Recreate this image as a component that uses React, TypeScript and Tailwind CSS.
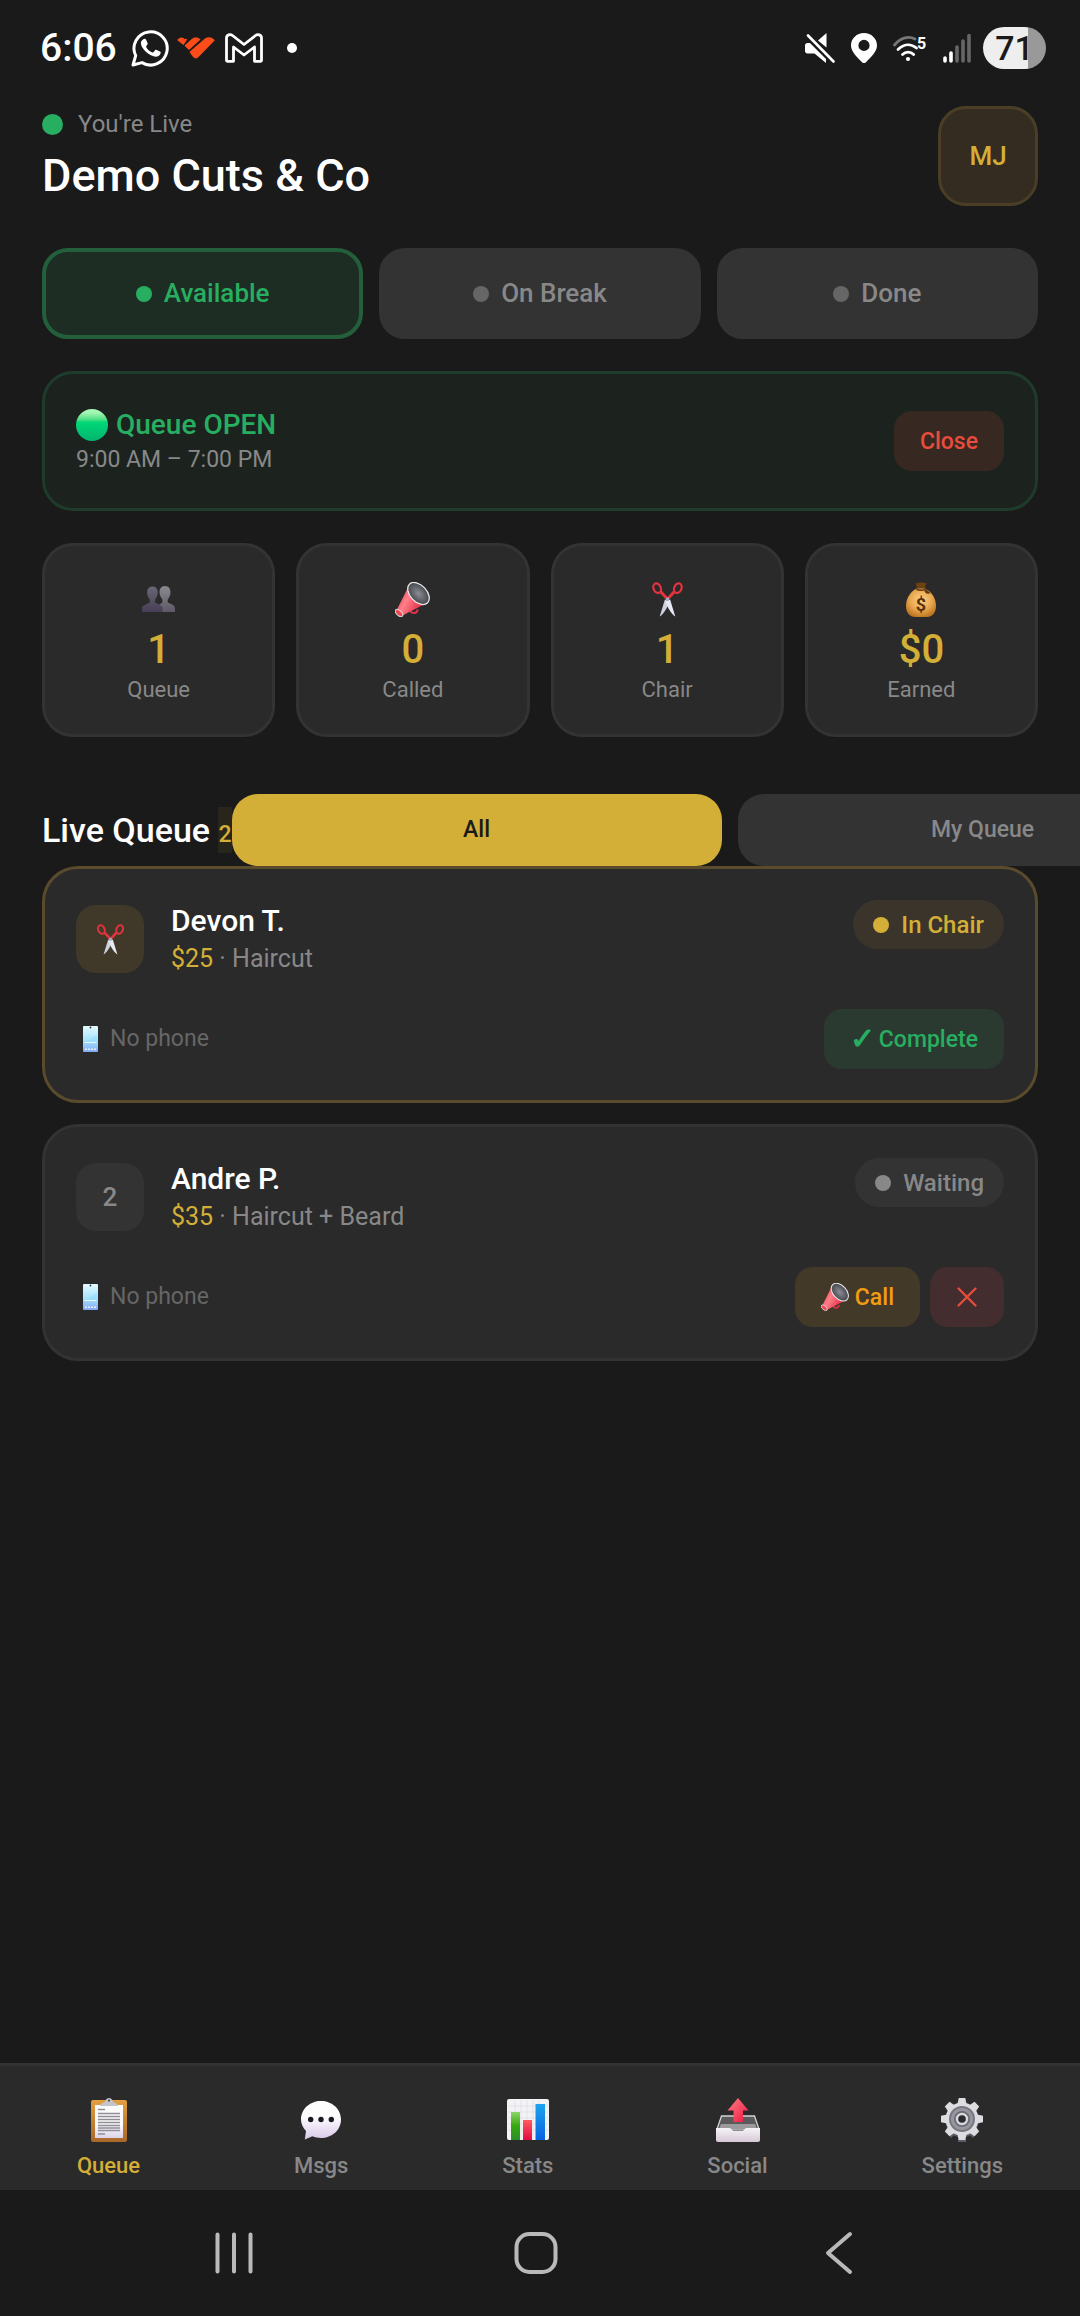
import { useState } from "react";
import type { ReactNode } from "react";

const statuses = ["Available", "On Break", "Done"];

const queue = [
  { id: 1, name: "Devon T.", price: "$25", service: "Haircut", inChair: true },
  { id: 2, name: "Andre P.", price: "$35", service: "Haircut + Beard", inChair: false },
];

function PeopleIcon() {
  return (
    <svg width="33" height="26" viewBox="0 0 33 26" aria-hidden="true">
      <defs>
        <linearGradient id="back" x1="0" y1="0" x2="0" y2="1">
          <stop offset="0" stopColor="#8b8a90" />
          <stop offset="1" stopColor="#5d5866" />
        </linearGradient>
        <linearGradient id="front" x1="0" y1="0" x2="0" y2="1">
          <stop offset="0" stopColor="#6a6675" />
          <stop offset="1" stopColor="#463e55" />
        </linearGradient>
      </defs>
      <path d="M23 0c3.600 0 5.500 2.800 5.500 6.200 0 3-1.400 5.600-2.800 7.200v3.200c2.800 1.600 7.300 2.200 7.300 6V26H15v-3c0-3.800 3.200-4.800 5.400-6.400v-3.200c-1.400-1.600-2.900-4.200-2.900-7.200C17.500 2.800 19.400 0 23 0z" fill="url(#back)" />
      <path d="M10.500 .5c3.500 0 5.300 2.600 5.300 6 0 3-1.400 5.400-2.700 7v3c2.200 1.700 7.400 2.200 7.400 6.200V26H0v-3.300c0-4 5.600-4.500 7.800-6.200v-3c-1.300-1.600-2.700-4-2.700-7 0-3.400 1.900-6 5.400-6z" fill="url(#front)" />
    </svg>
  );
}

function MegaphoneIcon({ size = 35 }: { size?: number }) {
  return (
    <svg width={size} height={size} viewBox="0 0 35 35" aria-hidden="true">
      <defs>
        <linearGradient id="cone" x1="0" y1="0" x2="1" y2=".5">
          <stop offset="0" stopColor="#d8283f" />
          <stop offset=".45" stopColor="#ff8088" />
          <stop offset="1" stopColor="#e0213f" />
        </linearGradient>
        <radialGradient id="mouth">
          <stop offset="0" stopColor="#8a8d93" />
          <stop offset="1" stopColor="#46484e" />
        </radialGradient>
      </defs>
      <path d="M15.500 29c1 3 6.500 3 7.200-1.500" fill="none" stroke="#e0304a" strokeWidth="2" />
      <path d="M13.500 4.500L1.500 28.500l6 5L32 21z" fill="url(#cone)" />
      <ellipse cx="4" cy="31" rx="4.600" ry="2.400" transform="rotate(42 4 31)" fill="#f1474f" stroke="#d9d9dc" strokeWidth="1" />
      <ellipse cx="23.500" cy="11.500" rx="13" ry="8.300" transform="rotate(47 23.500 11.500)" fill="url(#mouth)" stroke="#e9e9ec" strokeWidth="1.300" />
    </svg>
  );
}

function ScissorsIcon({ size = 35 }: { size?: number }) {
  return (
    <svg width={size} height={size} viewBox="-2.500 0 35 35" aria-hidden="true">
      <path d="M12.400 17.500L7.200 34.500c4-2.500 7.800-9 10-15z" fill="#cdd0e0" />
      <path d="M17.600 17.500l5.200 17c-4-2.500-7.800-9-10-15z" fill="#e6e8f3" />
      <g fill="none" stroke="#e5323f" strokeWidth="2.200">
        <ellipse cx="4.700" cy="6.200" rx="3.600" ry="5" transform="rotate(-22 4.700 6.200)" />
        <ellipse cx="25.300" cy="6.200" rx="3.600" ry="5" transform="rotate(22 25.300 6.200)" />
        <path d="M8 9.500l6 6.500M22 9.500l-6 6.500" strokeWidth="3" />
      </g>
      <circle cx="15" cy="17" r="1.800" fill="#a8abb8" />
    </svg>
  );
}

function MoneyBagIcon() {
  return (
    <svg width="30" height="35" viewBox="0 0 30 35" aria-hidden="true">
      <defs>
        <radialGradient id="bag" cx=".5" cy=".4" r=".62">
          <stop offset="0" stopColor="#ffd08a" />
          <stop offset=".6" stopColor="#e7a64e" />
          <stop offset="1" stopColor="#bd7420" />
        </radialGradient>
      </defs>
      <path d="M9.500 1c2 .8 3-.8 5.500-.5 2.500-.3 3.500 1 5.500.2l-1.700 5.800h-7.600z" fill="#6d4210" />
      <path d="M10.500 6.500h8.500C25 9.500 30 15.500 30 24c0 7-4 11-9 11H9c-5 0-9-4-9-11C0 15.500 5 9.500 10.500 6.500z" fill="url(#bag)" />
      <path d="M10.300 7.200c3 1.300 6.400 1.300 9.200.3l3.500 3.300c-1.600.5-3.200-.6-4-2" fill="none" stroke="#5e370c" strokeWidth="1.500" />
      <text x="15" y="29" textAnchor="middle" fontSize="18" fontWeight="700" fill="#5a3208" fontFamily="Roboto, sans-serif">$</text>
    </svg>
  );
}

function PhoneIcon() {
  return (
    <svg width="15" height="26" viewBox="0 0 15 26" aria-hidden="true">
      <defs>
        <linearGradient id="screen" x1="0" y1="0" x2="0" y2="1">
          <stop offset="0" stopColor="#e4fbff" />
          <stop offset=".55" stopColor="#a5e2fb" />
          <stop offset="1" stopColor="#84a8f4" />
        </linearGradient>
      </defs>
      <rect width="15" height="26" rx="1" fill="url(#screen)" />
      <path d="M14 1v8L3 16h11z" fill="#8fd9fb" opacity=".5" />
      <circle cx="7.500" cy="1.500" r=".9" fill="#333" />
      <path d="M1.500 16.500h12" stroke="#e8f8ff" />
      <path d="M2 23.200h11.500" stroke="#fff" strokeWidth="1.500" strokeDasharray="2 1" opacity=".8" />
    </svg>
  );
}

function ClipboardIcon() {
  return (
    <svg width="36" height="44" viewBox="0 0 36 44" aria-hidden="true">
      <defs>
        <linearGradient id="board" x1="0" y1="0" x2="0" y2="1">
          <stop offset="0" stopColor="#e3a040" />
          <stop offset="1" stopColor="#a9672b" />
        </linearGradient>
        <linearGradient id="sheet" x1="0" y1="0" x2="0" y2="1">
          <stop offset=".6" stopColor="#fbfbfc" />
          <stop offset="1" stopColor="#dcd3ea" />
        </linearGradient>
      </defs>
      <rect y="2" width="36" height="42" rx="2" fill="url(#board)" />
      <path d="M4 7h28v33H4z" fill="url(#sheet)" />
      <path d="M7 11.500h7M7 36h7M7 15.500h22M7 18.500h22M7 21.500h22M7 24.500h22M7 27.500h22M7 30h22M7 32.500h22" stroke="#8f8e96" strokeWidth="1.300" />
      <path d="M9 8c0-3 3-2.500 5-4.500C15 1 16.500 0 18 0s3 1 4 3.500C24 5.500 27 5 27 8z" fill="#c3c4c8" />
      <circle cx="18" cy="2.600" r="1.100" fill="#44454a" />
    </svg>
  );
}

function BubbleIcon() {
  return (
    <svg width="40" height="44" viewBox="0 -3 40 44" aria-hidden="true">
      <defs>
        <linearGradient id="bubble" x1="0" y1="0" x2="0" y2="1">
          <stop offset=".4" stopColor="#fdfdfe" />
          <stop offset="1" stopColor="#d9c8ea" />
        </linearGradient>
      </defs>
      <path d="M20 0c11 0 20 8 20 18.500S31 37 20 37c-3 0-6-.6-8.600-1.700L3.800 38.500 5 30C2 27 0 23 0 18.500 0 8 9 0 20 0z" fill="url(#bubble)" />
      <g fill="#1d1720">
        <circle cx="9.700" cy="18.500" r="2.700" />
        <circle cx="20" cy="18.500" r="2.700" />
        <circle cx="30.300" cy="18.500" r="2.700" />
      </g>
    </svg>
  );
}

function ChartIcon() {
  return (
    <svg width="42" height="44" viewBox="0 -1 42 44" aria-hidden="true">
      <defs>
        <linearGradient id="green" x1="0" y1="0" x2="0" y2="1">
          <stop offset="0" stopColor="#8fd46a" />
          <stop offset=".5" stopColor="#35a80c" />
          <stop offset="1" stopColor="#2b8e2b" />
        </linearGradient>
        <linearGradient id="red" x1="0" y1="0" x2="0" y2="1">
          <stop offset="0" stopColor="#ff5a5f" />
          <stop offset="1" stopColor="#e20a45" />
        </linearGradient>
        <linearGradient id="blue" x1="0" y1="0" x2="0" y2="1">
          <stop offset="0" stopColor="#1ea4ee" />
          <stop offset="1" stopColor="#0763e0" />
        </linearGradient>
      </defs>
      <rect width="42" height="41" rx="2" fill="#f3f3f6" />
      <path d="M1 7h40M1 13h40M1 19h40M1 25h40M1 31h40M8 1v39M14 1v39M20 1v39M26 1v39M32 1v39" stroke="#dcdce2" strokeWidth=".7" />
      <path d="M4 13h9v28H4z" fill="url(#green)" />
      <path d="M16 21h9v20h-9z" fill="url(#red)" />
      <path d="M28.500 5h9.500v36h-9.500z" fill="url(#blue)" />
    </svg>
  );
}

function OutboxIcon() {
  return (
    <svg width="44" height="44" viewBox="0 0 44 44" aria-hidden="true">
      <defs>
        <linearGradient id="tray" x1="0" y1="0" x2="0" y2="1">
          <stop offset="0" stopColor="#f6f3f7" />
          <stop offset="1" stopColor="#d6c9d6" />
        </linearGradient>
        <linearGradient id="arrow" x1="0" y1="0" x2="1" y2="1">
          <stop offset="0" stopColor="#ff7f85" />
          <stop offset="1" stopColor="#ee1742" />
        </linearGradient>
      </defs>
      <path d="M5.500 18h33l4.500 13H1z" fill="#5b5b5d" stroke="#d4d4d6" strokeWidth="1.300" />
      <path d="M5 26h34l2 5H3z" fill="#9b9b9e" />
      <path d="M0 30h14l3 2.500h10l3-2.500h14v12c0 1-.8 2-2 2H2c-1.200 0-2-1-2-2z" fill="url(#tray)" />
      <path d="M22 0l10.500 12.500H27V24h-9.500V12.500h-6z" fill="url(#arrow)" />
    </svg>
  );
}

function GearIcon() {
  return (
    <svg width="42" height="44" viewBox="0 0 42 44" aria-hidden="true">
      <g fill="#5d5c68">
        <circle cx="21" cy="23" r="16.500" />
        <path d="M17 38h8v6h-8zM5 34l5-4 5 5-5 5zM37 34l-5-4-5 5 5 5z" />
      </g>
      <g fill="#dcdce1">
        <circle cx="21" cy="21" r="16.500" />
        {[0, 45, 90, 135, 180, 225, 270, 315].map((a) => (
          <path key={a} d="M16.500 6l1.200-6h6.600l1.200 6z" transform={`rotate(${a} 21 21)`} />
        ))}
      </g>
      <circle cx="21" cy="21" r="13" fill="#777782" />
      <circle cx="21" cy="21" r="11" fill="#96969f" />
      <circle cx="21" cy="21" r="8" fill="#6c6c76" />
      <circle cx="21" cy="21" r="5" fill="#2b2b2e" stroke="#d7d7dc" strokeWidth="2.400" />
    </svg>
  );
}

const stats = [
  { label: "Queue", value: "1", icon: <PeopleIcon /> },
  { label: "Called", value: "0", icon: <MegaphoneIcon /> },
  { label: "Chair", value: "1", icon: <ScissorsIcon /> },
  { label: "Earned", value: "$0", icon: <MoneyBagIcon /> },
];

const tabs = [
  { label: "Queue", icon: <ClipboardIcon /> },
  { label: "Msgs", icon: <BubbleIcon /> },
  { label: "Stats", icon: <ChartIcon /> },
  { label: "Social", icon: <OutboxIcon /> },
  { label: "Settings", icon: <GearIcon /> },
];

function StatusBar() {
  return (
    <div className="flex h-24 items-center justify-between pr-[34px] pl-10">
      <div className="flex items-center">
        <span className="text-[39px] leading-none font-medium">6:06</span>
        <svg className="ml-[14px]" width="38" height="38" viewBox="0 0 38 38" aria-label="WhatsApp">
          <path d="M2 36l2.700-9.300A16.600 16.600 0 1 1 11 33.600z" fill="none" stroke="#fff" strokeWidth="3" strokeLinejoin="round" />
          <path d="M12 10.500c1-1 2.600-1 3.100.2l1.500 3.500c.3.700-.2 1.500-1.200 2.700-.4.500-.4.900 0 1.500 1.500 2.400 3.300 3.900 5.800 5 .6.200 1 .1 1.400-.4l1.500-1.800c.5-.6 1-.6 1.600-.3l3.300 1.600c.7.400.8.900.6 1.700-.5 2.300-2.700 3.500-4.800 3.500-2.600 0-7-2-9.700-4.700-3-3-5.300-6.200-5.200-9 .1-1.500.9-2.600 2.100-3.500z" fill="#fff" />
        </svg>
        <svg className="ml-2" width="38" height="22" viewBox="0 0 38 22" aria-label="Workout">
          <g fill="#fc4c1a" stroke="#fc4c1a" strokeWidth="1.600" strokeLinejoin="round">
            <path d="M1.200 3c2-2 4.500-2 6.500 0l1.500-.5L6.200 7z" />
            <path d="M8.600 8.700L15.500 2.300c2-1.600 5-1.500 7 .2L12 12z" />
            <path d="M14.500 14.200L28.500 2c3-1.500 6-1 8.300 1.300L21 19.500c-1.400 1.300-3 1.300-4.300 0L13.500 15z" />
          </g>
        </svg>
        <svg className="ml-[10px]" width="38" height="30" viewBox="0 0 38 30" aria-label="Gmail">
          <path d="M1.500 5c0-3 3.500-4.500 6-2.500L19 11.500l11.500-9c2.500-2 6-.5 6 2.500v22c0 .8-.5 1.300-1.300 1.300h-5.700V14L19 22 8.500 14v14.300H2.800c-.8 0-1.300-.5-1.300-1.300z" fill="none" stroke="#fff" strokeWidth="2.800" strokeLinejoin="round" />
        </svg>
        <span className="ml-6 size-[10px] rounded-full bg-white" />
      </div>
      <div className="flex items-center gap-4">
        <svg width="30" height="30" viewBox="0 0 30 30" aria-label="Muted">
          <path d="M0 12.500C0 11 1 10 2.500 10H5l16 16v4L9.500 20.500h-7C1 20.500 0 19.500 0 18z" fill="#fff" />
          <path d="M13 7.500L21.500 0v14.500z" fill="#fff" />
          <path d="M3 2.500L28.500 28.500" stroke="#fff" strokeWidth="2.600" strokeLinecap="round" />
        </svg>
        <svg width="26" height="30" viewBox="0 0 26 30" aria-label="Location">
          <path fillRule="evenodd" d="M13 0c7.200 0 13 5.500 13 12.500C26 19 19 25 15 29.300c-1 1-3 1-4 0C7 25 0 19 0 12.500 0 5.500 5.800 0 13 0zm0 6.800a5.600 5.600 0 1 0 0 11.200 5.600 5.600 0 0 0 0-11.200z" fill="#fff" />
        </svg>
        <svg width="34" height="34" viewBox="1 -4 34 34" aria-label="Wi-Fi">
          <g fill="none" strokeWidth="2.800" strokeLinecap="round">
            <path d="M2.500 10C9 2 17 1 23 4" stroke="#777" />
            <path d="M6 14.500c6-6 13-6 18.500-1.500" stroke="#fff" />
            <path d="M10.500 19.500c3.300-3.300 8-3.300 11.200 0" stroke="#fff" />
          </g>
          <circle cx="16" cy="24" r="2.100" fill="#fff" />
          <text x="25" y="13.500" fontSize="16" fontWeight="700" fill="#fff" fontFamily="Roboto, sans-serif">5</text>
        </svg>
        <svg width="28" height="30" viewBox="0 0 28 30" aria-label="Signal">
          <g strokeWidth="3.600" strokeLinecap="round">
            <path d="M2 25v3M8 20v8" stroke="#fff" />
            <path d="M14 14v14M20 8v20M26 2.500V28" stroke="#666" />
          </g>
        </svg>
        <span className="-ml-1 flex h-[42px] w-[63px] items-center justify-center rounded-full bg-[linear-gradient(90deg,#eeeeee_71%,#999999_71%)] text-[34px] leading-none font-medium text-[#1a1a1a]">
          71
        </span>
      </div>
    </div>
  );
}

function ActionButton({ className, children, label }: { className: string; children: ReactNode; label?: string }) {
  return (
    <button aria-label={label} className={`flex h-[60px] items-center rounded-[18px] px-[26px] text-[23px] leading-none font-medium ${className}`}>
      {children}
    </button>
  );
}

function QueueCard({ item }: { item: (typeof queue)[number] }) {
  return (
    <li className={`flex flex-col gap-[31px] rounded-[36px] border-[3px] bg-[#2a2a2a] p-[31px] ${item.inChair ? "border-[#5a4b2c]" : "border-[#333333]"}`}>
      <div className="flex items-center gap-[27px]">
        <span className={`flex size-[68px] items-center justify-center rounded-[20px] text-[26px] font-medium ${item.inChair ? "bg-[#403929]" : "bg-[#333333] text-[#888888]"}`}>
          {item.inChair ? <ScissorsIcon size={31} /> : item.id}
        </span>
        <div className="flex-1 pt-[2px]">
          <h3 className="text-[30px] leading-[38px] font-medium">{item.name}</h3>
          <p className="text-[25px] leading-[38px] text-[#888888]">
            <span className="text-[#d4af37]">{item.price}</span> · {item.service}
          </p>
        </div>
        <span className={`flex h-[49px] items-center gap-3 self-start rounded-full px-5 text-[24px] leading-none font-medium ${item.inChair ? "bg-[#3a342a] text-[#d4af37]" : "bg-[#333333] text-[#888888]"}`}>
          <span className="size-4 rounded-full bg-current" />
          {item.inChair ? "In Chair" : "Waiting"}
        </span>
      </div>
      <div className="flex items-center justify-between">
        <p className="flex items-center gap-3 pl-[7px] text-[23px] text-[#666666]">
          <PhoneIcon />
          No phone
        </p>
        {item.inChair ? (
          <ActionButton className="gap-1 bg-[#2a3a31] text-[#27ae60]">
            <span className="text-[30px] font-bold">✓</span>Complete
          </ActionButton>
        ) : (
          <div className="flex gap-[10px]">
            <ActionButton className="gap-[6px] bg-[#433928] text-[#f39c12]">
              <MegaphoneIcon size={28} />
              Call
            </ActionButton>
            <ActionButton label="Remove" className="bg-[#432d2e] text-[#e74c3c]">
              <svg width="22" height="22" viewBox="0 0 22 22">
                <path d="M2.500 2.500l17 17M19.500 2.500l-17 17" stroke="currentColor" strokeWidth="2.400" strokeLinecap="round" />
              </svg>
            </ActionButton>
          </div>
        )}
      </div>
    </li>
  );
}

export default function App() {
  const [status, setStatus] = useState("Available");
  const [filter, setFilter] = useState("All");
  const [tab, setTab] = useState("Queue");

  return (
    <div className="flex min-h-screen flex-col overflow-hidden bg-[#1a1a1a] font-[Roboto,'Noto_Sans',sans-serif] text-white">
      <StatusBar />

      <main className="flex-1 px-[42px] pt-[10px]">
        <header className="flex items-center justify-between">
          <div className="pt-[2px]">
            <p className="flex items-center gap-[15px] text-[24px] leading-7 text-[#888888]">
              <span className="size-[21px] rounded-full bg-[#27ae60]" />
              You're Live
            </p>
            <h1 className="mt-[10px] text-[45px] leading-[56px] font-medium">Demo Cuts &amp; Co</h1>
          </div>
          <button className="flex size-[100px] items-center justify-center rounded-[28px] border-[3px] border-[#4a3f26] bg-[#342c20] text-[26px] font-medium text-[#d4af37]">
            MJ
          </button>
        </header>

        <div className="mt-[42px] flex gap-4">
          {statuses.map((s) => (
            <button
              key={s}
              onClick={() => setStatus(s)}
              className={`flex h-[91px] flex-1 items-center justify-center gap-3 rounded-[26px] border-4 text-[26px] font-medium ${
                s === status ? "border-[#245f3c] bg-[#1e2d24] text-[#27ae60]" : "border-[#333333] bg-[#333333] text-[#888888]"
              }`}
            >
              <span className={`size-4 rounded-full ${s === status ? "bg-[#27ae60]" : "bg-[#666666]"}`} />
              {s}
            </button>
          ))}
        </div>

        <section className="mt-8 flex items-center justify-between rounded-[31px] border-[3px] border-[#1f3b2b] bg-[#1c231f] p-[31px]">
          <div className="pt-[2px]">
            <h2 className="flex items-center gap-2 text-[28px] leading-[36px] font-medium text-[#27ae60]">
              <span className="size-8 rounded-full bg-linear-to-b from-[#a6f7b4] from-10% via-[#00d877] via-40% to-[#00b56f]" />
              Queue OPEN
            </h2>
            <p className="text-[23px] leading-[34px] text-[#888888]">9:00 AM – 7:00 PM</p>
          </div>
          <ActionButton className="bg-[#372822] text-[#e74c3c]">Close</ActionButton>
        </section>

        <section className="mt-8 grid grid-cols-4 gap-[21px]">
          {stats.map((s) => (
            <div key={s.label} className="flex flex-col items-center rounded-[31px] border-[3px] border-[#333333] bg-[#2a2a2a] pt-[35px] pb-7">
              <span className="flex h-9 items-center">{s.icon}</span>
              <span className="mt-[9px] text-[40px] leading-[48px] font-medium text-[#d4af37]">{s.value}</span>
              <span className="text-[22px] leading-8 text-[#888888]">{s.label}</span>
            </div>
          ))}
        </section>

        <section className="mt-[57px]">
          <div className="flex items-center">
            <h2 className="shrink-0 text-[34px] leading-10 font-medium">
              Live Queue{" "}
              <span className="inline-block bg-[#d4af37]/8 pt-[10px] text-[23px] leading-9 text-[#d4af37]">2</span>
            </h2>
            <div className="flex shrink-0 gap-4">
              {["All", "My Queue"].map((f) => (
                <button
                  key={f}
                  onClick={() => setFilter(f)}
                  className={`h-[72px] w-[490px] rounded-[26px] text-[23px] font-medium ${
                    f === filter ? "bg-[#d4af37] text-[#1a1a1a]" : "bg-[#333333] text-[#888888]"
                  }`}
                >
                  {f}
                </button>
              ))}
            </div>
          </div>
          <ul className="flex flex-col gap-[21px]">
            {queue.map((item) => (
              <QueueCard key={item.id} item={item} />
            ))}
          </ul>
        </section>
      </main>

      <nav className="flex justify-around border-t-[3px] border-[#333333] bg-[#2a2a2a] pt-8 pb-2">
        {tabs.map((t) => (
          <button
            key={t.label}
            onClick={() => setTab(t.label)}
            className={`flex flex-col items-center gap-2 text-[22px] leading-8 font-medium ${t.label === tab ? "text-[#d4af37]" : "text-[#888888]"}`}
          >
            {t.icon}
            {t.label}
          </button>
        ))}
      </nav>

      <div className="grid h-[126px] grid-cols-3 place-items-center pr-[90px] pl-[83px]">
        <button aria-label="Recents">
          <svg width="40" height="44" viewBox="0 0 40 44" fill="none" stroke="#b9b9b9" strokeWidth="4" strokeLinecap="round">
            <path d="M3.500 3.500v37M20 3.500v37M36.500 3.500v37" />
          </svg>
        </button>
        <button aria-label="Home">
          <svg width="44" height="44" viewBox="0 0 44 44" fill="none" stroke="#b9b9b9" strokeWidth="4">
            <rect x="2.500" y="3" width="39" height="38" rx="13" />
          </svg>
        </button>
        <button aria-label="Back">
          <svg width="28" height="44" viewBox="0 0 28 44" fill="none" stroke="#b9b9b9" strokeWidth="4" strokeLinecap="round" strokeLinejoin="round">
            <path d="M25 3L3 22l22 19" />
          </svg>
        </button>
      </div>
    </div>
  );
}
